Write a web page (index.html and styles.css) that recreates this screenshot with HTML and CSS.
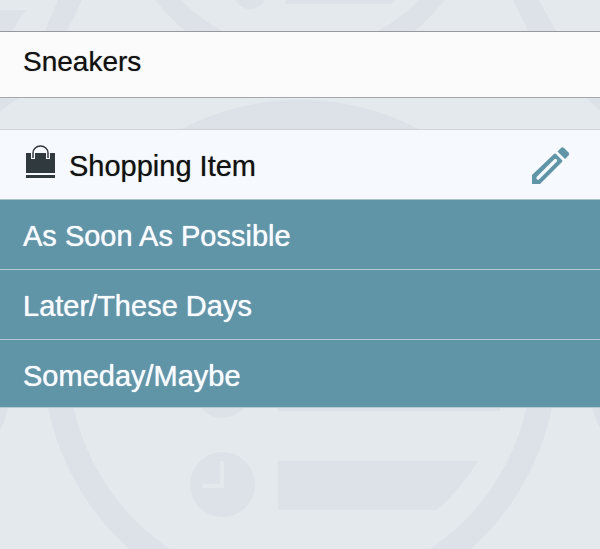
FILE: index.html
```html
<!DOCTYPE html>
<html lang="en">
<head>
<meta charset="utf-8">
<meta name="viewport" content="width=device-width, initial-scale=1">
<title>Sneakers</title>
<link rel="stylesheet" href="styles.css">
</head>
<body>
<svg class="backdrop" viewBox="0 0 600 549" preserveAspectRatio="xMidYMin slice" aria-hidden="true">
  <g fill="none" stroke="#dde2e9">
    <circle cx="300" cy="-112" r="173" stroke-width="20"/>
    <circle cx="300" cy="357" r="244.500" stroke-width="25"/>
  </g>
  <g fill="#dde2e9">
    <circle cx="300" cy="357" r="240" clip-path="url(#cap)"/>
    <path d="M58 0H82L67 31H45Z M513 0H539L556 31H528Z"/>
    <path d="M0 10H26L12 31H0Z"/>
    <circle cx="250" cy="-7" r="16"/>
    <path d="M285 0H395L391 4H285Z"/>
    <path d="M0 98H19Q9 104 0 112Z M586 98H600V111Z"/>
    <path d="M0 407H8Q6 420 0 430Z M592 407H600V428Q595 419 592 407Z"/>
    <circle cx="222" cy="390" r="28"/>
    <path d="M278 400H500V411H278Z"/>
    <circle cx="222.500" cy="484.500" r="32.500"/>
    <path d="M278 461H478Q461 489 437 510H278Z"/>
  </g>
  <path d="M222 461V486H203" fill="none" stroke="#e4e9ed" stroke-width="4"/>
  <defs><clipPath id="cap"><path d="M150 98H450V160H150Z"/></clipPath></defs>
</svg>
<main class="page">
  <input class="name" type="text" aria-label="Item name" value="Sneakers">
  <section class="panel">
    <header class="type">
      <svg class="bag" viewBox="0 0 32 34" aria-hidden="true">
        <path fill="#30393d" d="M2 8H31V28H2Z M2 30H31V33H2Z"/>
        <path fill="none" stroke="#f6f9fe" stroke-width="4" d="M9 14V8M24 14V8"/>
        <path fill="none" stroke="#30393d" stroke-width="1.500" d="M9 13V8A7.500 7 0 0 1 24 8V13"/>
      </svg>
      <h1 class="title">Shopping Item</h1>
      <button class="edit" type="button" aria-label="Edit type">
        <svg class="pencil" viewBox="0 0 38 38" aria-hidden="true">
          <path fill="#6094a7" d="M0 29L22 8Q23 7 24 8L30 14Q31 15 30 16L8 38H0Z"/>
          <path fill="none" stroke="#f6f9fe" stroke-width="3.200" stroke-linecap="round" d="M6 32L23.500 14.500"/>
          <path fill="#6094a7" d="M25.500 5.500L29 2Q30.500 0.500 32 2L36.500 6.500Q38 8 36.500 9.500L33 13Z"/>
        </svg>
      </button>
    </header>
    <button class="choice" type="button">As Soon As Possible</button>
    <button class="choice" type="button">Later/These Days</button>
    <button class="choice" type="button">Someday/Maybe</button>
  </section>
</main>
</body>
</html>
```
FILE: styles.css
```css
* {
  box-sizing: border-box;
}

body {
  margin: 0;
  background: #e4e9ed;
  color: #111;
  font: 28px/32px "Liberation Sans", Arial, sans-serif;
}

.backdrop {
  position: fixed;
  inset: 0;
  z-index: -1;
  width: 100%;
  height: 100%;
}

.page {
  display: flex;
  flex-direction: column;
  gap: 31px;
  padding-top: 31px;
}

.name {
  width: 100%;
  margin: 0;
  padding: 14px 23px 19px;
  border: 0;
  border-top: 1px solid #97999f;
  border-bottom: 1px solid #a5a7ac;
  border-radius: 0;
  background: #fbfbfb;
  color: inherit;
  font: inherit;
  line-height: 32px;
  text-shadow: 0 0 1px #777;
  outline: 0;
}

.panel {
  border-top: 1px solid #d0d2d7;
  font-size: 29px;
}

.type {
  display: flex;
  align-items: center;
  padding: 0 30px 0 24px;
  height: 70px;
  background: #f6f9fe;
  border-bottom: 1px solid #a9c1cb;
}

.bag {
  width: 32px;
  height: 34px;
  margin-bottom: 5px;
}

.title {
  flex: 1;
  margin: 0 0 0 13px;
  padding-top: 3px;
  font: inherit;
  text-shadow: 0 0 1px #777;
}

.edit {
  display: flex;
  padding: 0;
  border: 0;
  background: none;
}

.pencil {
  width: 38px;
  height: 38px;
}

.choice {
  display: block;
  width: 100%;
  padding: 20px 23px 17px;
  border: 0;
  border-bottom: 1px solid #b4cad4;
  background: #6094a7;
  color: #f8fcff;
  font: inherit;
  text-align: left;
  text-shadow: 0 0 1px #f8fcff;
}

.choice:last-child {
  padding-bottom: 15px;
}
```
